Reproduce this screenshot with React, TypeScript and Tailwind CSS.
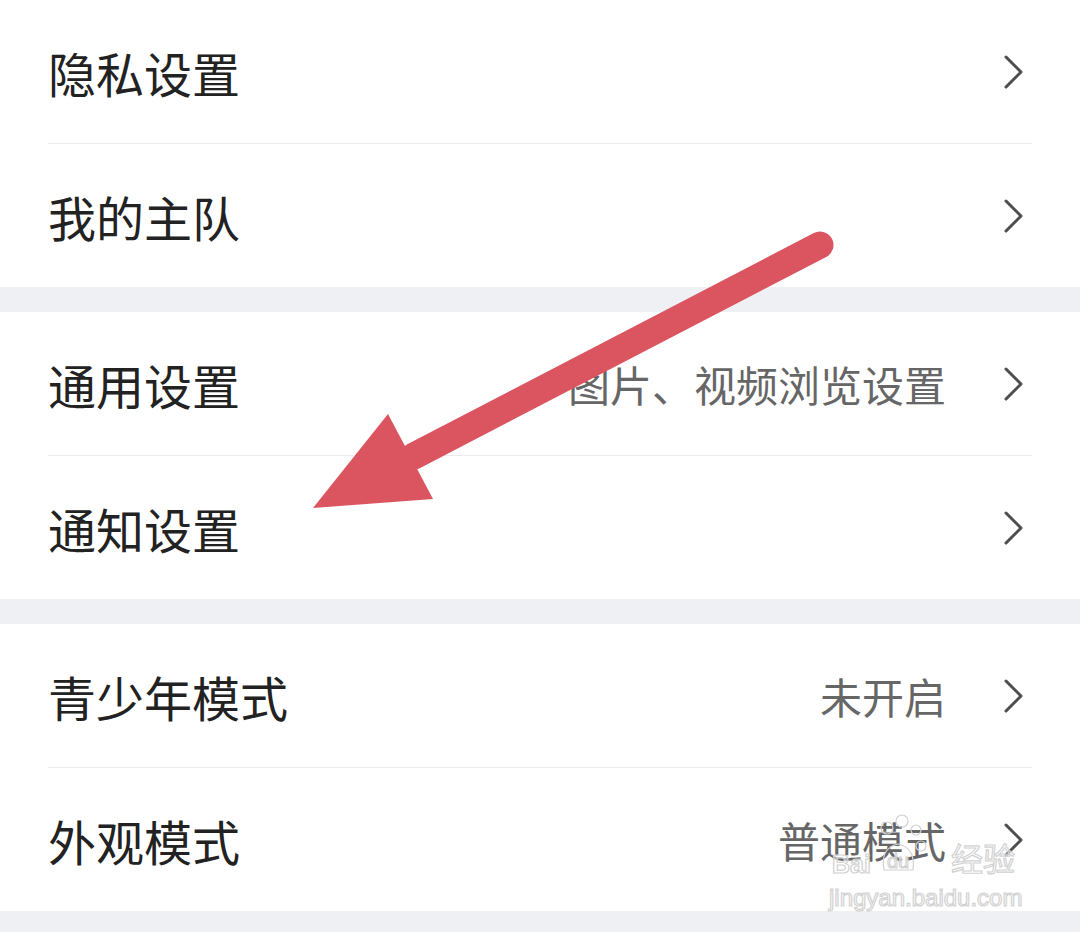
import React from 'react';

type Item = { title: string; value?: string };

const groups: Item[][] = [
  [{ title: '隐私设置' }, { title: '我的主队' }],
  [{ title: '通用设置', value: '图片、视频浏览设置' }, { title: '通知设置' }],
  [{ title: '青少年模式', value: '未开启' }, { title: '外观模式', value: '普通模式' }],
];

function Chevron() {
  return (
    <svg width="19" height="34" viewBox="0 0 19 34" className="shrink-0">
      <polyline points="2,2 17,17 2,32" fill="none" stroke="#4d4d4d" strokeWidth="3" strokeLinecap="round" strokeLinejoin="round" />
    </svg>
  );
}

function Row({ item }: { item: Item }) {
  return (
    <div className="mx-12 flex h-[143px] items-center">
      <span className="pt-[1px] text-[48px] leading-none text-[#222222]">{item.title}</span>
      <div className="ml-auto flex items-center pr-[9px]">
        {item.value && (
          <span className="mr-[58px] pt-[1px] text-[42px] leading-none text-[#666666]">{item.value}</span>
        )}
        <Chevron />
      </div>
    </div>
  );
}

function Arrow() {
  return (
    <svg className="pointer-events-none absolute left-0 top-0" width="1080" height="932">
      <line x1="820" y1="245" x2="414" y2="456" stroke="#db5561" strokeWidth="27" strokeLinecap="round" />
      <polygon points="313,508 388,414 433,499" fill="#db5561" />
    </svg>
  );
}

// faint baidu jingyan watermark, bottom right
function Watermark() {
  return (
    <svg className="pointer-events-none absolute left-0 top-0" width="1080" height="932">
      <g fill="rgba(255,255,255,0.5)" stroke="#d2d2d2" strokeWidth="1.2" fontFamily="'Liberation Sans', Arial, sans-serif">
        <text x="832" y="873" fontSize="25" fontWeight="700">Bai</text>
        <path d="M884 870 Q880 848 898 844 Q916 848 913 870 Z" fill="none" />
        <circle cx="887" cy="828" r="6" fill="none" />
        <circle cx="902" cy="821" r="6" fill="none" />
        <circle cx="916" cy="830" r="5" fill="none" />
        <circle cx="921" cy="846" r="5" fill="none" />
        <text x="887" y="868" fontSize="20">du</text>
        <text x="951" y="871" fontSize="32" fontFamily="'Noto Sans CJK SC', sans-serif">经验</text>
        <text x="829" y="906" fontSize="24">jingyan.baidu.com</text>
      </g>
    </svg>
  );
}

export default function App() {
  return (
    <div
      className="relative h-[932px] w-[1080px] overflow-hidden bg-[#eff0f4]"
      style={{ fontFamily: "'Noto Sans CJK SC', 'Noto Sans', sans-serif" }}
    >
      <div className="flex flex-col gap-[25px]">
        {groups.map((g, gi) => (
          <div key={gi} className="bg-white">
            {g.map((item, i) => (
              <React.Fragment key={item.title}>
                {i > 0 && <div className="mx-12 h-px bg-[#ececec]" />}
                <Row item={item} />
              </React.Fragment>
            ))}
          </div>
        ))}
      </div>
      <Arrow />
      <Watermark />
    </div>
  );
}
